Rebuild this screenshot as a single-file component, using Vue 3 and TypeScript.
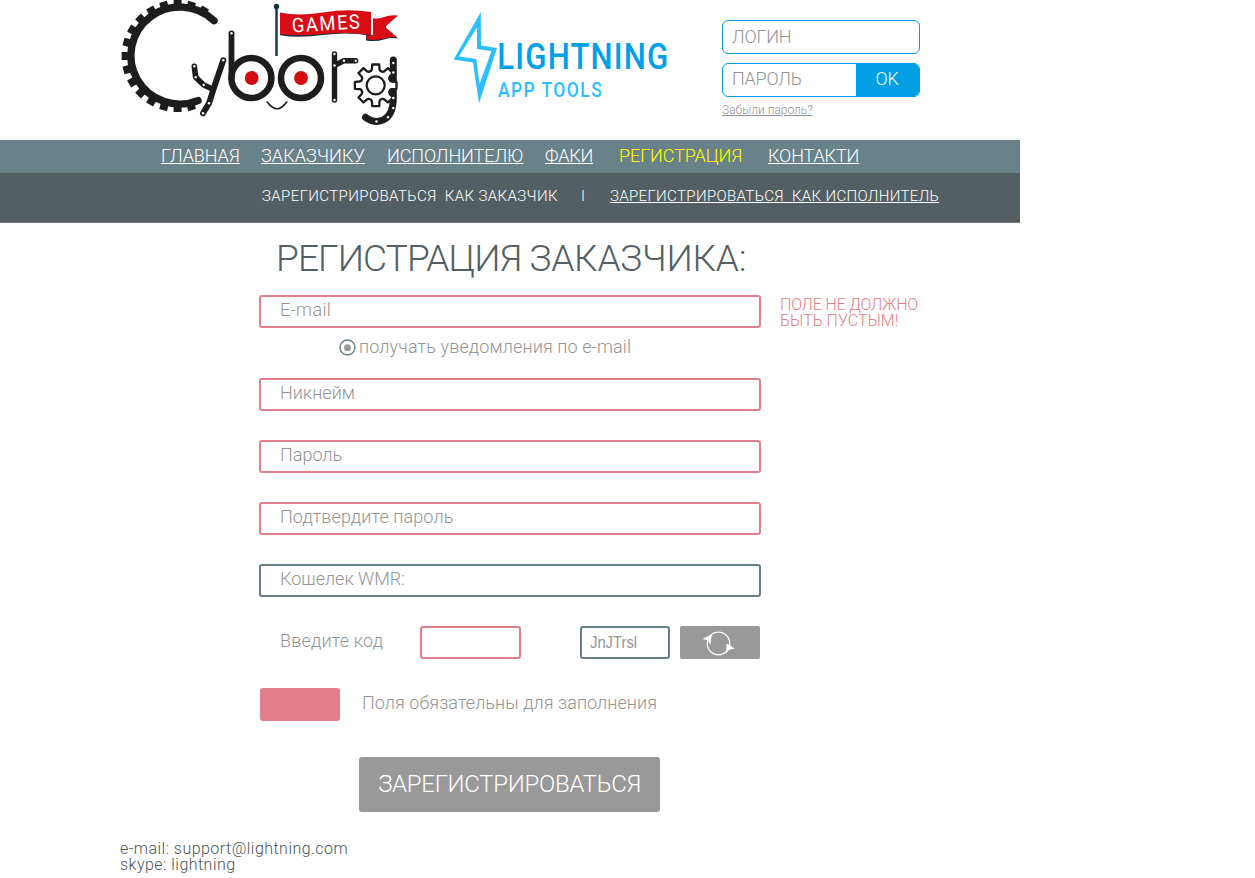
<script setup lang="ts">
const teeth: number[] = Array.from({ length: 16 }, (_, i) => 30 - i * 15)

const gearPath: string = (() => {
  const points: string[] = []
  for (let i = 0; i < 8; i++) {
    const a = (i * Math.PI) / 4
    const corners: [number, number][] = [[14.4, -4.6], [16, -3.8], [20.8, -3.5], [20.8, 3.5], [16, 3.8], [14.4, 4.6]]
    for (const [x, y] of corners) {
      points.push(`${(375.7 + x * Math.cos(a) - y * Math.sin(a)).toFixed(2)} ${(85.3 + x * Math.sin(a) + y * Math.cos(a)).toFixed(2)}`)
    }
  }
  return `M${points.join('L')}Z`
})()

interface NavItem { label: string; cls: string }
const nav: NavItem[] = [
  { label: 'ГЛАВНАЯ', cls: 'n1' },
  { label: 'ЗАКАЗЧИКУ', cls: 'n2' },
  { label: 'ИСПОЛНИТЕЛЮ', cls: 'n3' },
  { label: 'ФАКИ', cls: 'n4' },
  { label: 'РЕГИСТРАЦИЯ', cls: 'n5 active' },
  { label: 'КОНТАКТИ', cls: 'n6' },
]

const rivets: [number, number][] = [
  [194.3, 66.3], [195.7, 77.3], [203.7, 85], [223.3, 60.3], [209, 103.3], [203, 113.3], [231.5, 33.3],
  [334.5, 54], [334.5, 65.5], [344, 60.7], [355.7, 60.7], [334.5, 100],
  [393.3, 63], [393.3, 72.5], [393.3, 98], [393.3, 108], [388, 117.3], [376.5, 121.5],
]
</script>

<template>
  <div class="page">
    <header class="header">
      <svg class="cyborg" viewBox="115 0 290 130" width="290" height="130">
        <g fill="none" stroke="#1d1d1b" stroke-linecap="round" stroke-linejoin="round">
          <path d="M214 20.7A49 48.5 0 1 0 198 100.6" stroke-width="7.4" />
          <path d="M194.3 66.3L195.7 77.3L203.7 85L212.3 89" stroke-width="5.6" />
          <path d="M223.3 60.3L213.7 88.5L209 103.3L203 113.3" stroke-width="6" />
          <path d="M231.5 33.3V78" stroke-width="5.8" />
          <circle cx="251.4" cy="78" r="20" stroke-width="6.5" />
          <circle cx="301" cy="78" r="20" stroke-width="6.5" />
          <path d="M267.3 102Q277 115.5 286.7 102" stroke-width="1.6" />
          <path d="M334.5 54V100M334.5 65.5L344 60.7H355.7" stroke-width="5.4" />
          <path d="M393.3 60V98C393.3 121 378 126 365.5 117.3" stroke-width="7" />
          <path :d="gearPath" fill="#fff" stroke-width="2.3" />
          <circle cx="375.7" cy="85.3" r="9" stroke-width="2.2" />
        </g>
        <g fill="#1d1d1b">
          <rect v-for="a in teeth" :key="a" x="173.6" y="0" width="8" height="7" :transform="`rotate(${a} 177.6 56)`" />
        </g>
        <circle cx="251.7" cy="78" r="6.9" fill="#d20a11" />
        <circle cx="301" cy="78" r="6.9" fill="#d20a11" />
        <circle v-for="(r, i) in rivets" :key="i" :cx="r[0]" :cy="r[1]" r="1.2" fill="#fff" />
        <path d="M276.5 6V56" stroke="#0b3540" stroke-width="2.4" />
        <circle cx="276.5" cy="6.5" r="2.7" fill="#0b3540" />
        <path d="M366 35V40.5Q376 42 384 39.5T398 38.8L386 28V20L373 19V35Z" fill="#0b3540" />
        <path d="M366.5 34V39.3Q376 41 384 38.5T397.5 37.6L385 27L398 15.6Q391 14.5 384 17T373 18V35Z" fill="#d90b14" />
        <path d="M280 35.2Q298 38.5 323 35T371 35.8V33H280Z" fill="#0b3540" />
        <path d="M280 12.5Q298 16.5 323 12.5T371 12V35Q347 31.5 323 34T280 34.2Z" fill="#d90b14" />
        <path d="M372.2 18V35" stroke="#fff" stroke-width="1.3" />
        <text class="games" transform="translate(292.3 32.5) rotate(-3.5) scale(.92 1)" textLength="74">GAMES</text>
      </svg>
      <svg class="lightning" viewBox="445 5 235 105" width="235" height="105">
        <path fill="#2cbfff" fill-rule="evenodd" d="M480.8 12L481 45.5L497 48L479 103.5L473 62.5L453.7 59.5ZM477 27.5L458.8 56.5L476.3 59L479.5 84L491.5 51L477 49Z" />
        <text class="lt" transform="translate(497.3 69) scale(.83 1)" textLength="206">LIGHTNING</text>
        <text class="at" transform="translate(498 97) scale(.85 1)" textLength="122">APP TOOLS</text>
      </svg>
      <form class="login">
        <div class="box">ЛОГИН</div>
        <div class="box second"><span class="pw">ПАРОЛЬ</span><span class="ok">OK</span></div>
        <a class="forgot">Забыли пароль?</a>
      </form>
    </header>
    <nav class="nav"><a v-for="n in nav" :key="n.label" :class="n.cls"><span>{{ n.label }}</span></a></nav>
    <div class="subnav">
      <span class="s1">ЗАРЕГИСТРИРОВАТЬСЯ&nbsp; КАК ЗАКАЗЧИК</span>
      <span class="sep">I</span>
      <a class="s2">ЗАРЕГИСТРИРОВАТЬСЯ&nbsp; КАК ИСПОЛНИТЕЛЬ</a>
    </div>
    <main class="main">
      <h1>РЕГИСТРАЦИЯ <span>ЗАКАЗЧИКА:</span></h1>
      <div class="row"><div class="field f1">E-mail</div><p class="error"><span class="e1">ПОЛЕ НЕ ДОЛЖНО</span><span>БЫТЬ ПУСТЫМ!</span></p></div>
      <div class="notify">
        <svg width="17" height="17" viewBox="0 0 17 17"><circle cx="8.5" cy="8.5" r="7.5" fill="none" stroke="#678087" stroke-width="1.4" /><circle cx="8.5" cy="8.7" r="3.5" fill="#999" /></svg>
        <span>получать уведомления по e-mail</span>
      </div>
      <div class="field f2">Никнейм</div>
      <div class="field f3">Пароль</div>
      <div class="field f4">Подтвердите пароль</div>
      <div class="field f5 dark">Кошелек WMR:</div>
      <div class="code">
        <span class="label">Введите код</span>
        <div class="field input"></div>
        <div class="field dark captcha"><span>JnJTrsl</span></div>
        <button class="refresh" type="button">
          <svg width="36" height="28" viewBox="701 629 36 28">
            <circle cx="718.5" cy="642.5" r="11.3" fill="none" stroke="#fff" stroke-width="1.2" />
            <path d="M702.5 638L712 633L710.3 644L707.8 639.3ZM735 647.5L726.5 642.5L726 652L729 648.8Z" fill="#fff" />
          </svg>
        </button>
      </div>
      <div class="legend"><i></i><span>Поля обязательны для заполнения</span></div>
      <button class="submit" type="button">ЗАРЕГИСТРИРОВАТЬСЯ</button>
    </main>
    <footer class="footer"><span>e-mail: support@lightning.com</span><span>skype: lightning</span></footer>
  </div>
</template>

<style>
body { background: #fff; overflow: hidden; }
</style>

<style scoped>
.page { width: 1255px; height: 878px; font-family: Roboto, sans-serif; font-weight: 300; color: #949494; font-size: 18px; line-height: 20px; white-space: nowrap; }
.page * { box-sizing: border-box; }
.header { display: flex; height: 140px; padding-left: 115px; }
.cyborg { flex: none; }
.lightning { flex: none; margin: 5px 41.5px 0 40px; }
.games { font: 400 20px Roboto, sans-serif; fill: #fff; }
.lt { font: 500 37.5px Roboto, sans-serif; fill: #009fe8; }
.at { font: 500 20.5px Roboto, sans-serif; fill: #2cbfff; }
.login { width: 198px; padding-top: 20px; }
.box { display: flex; height: 34px; border: 1px solid #009fe3; border-radius: 6px; padding-left: 9.5px; line-height: 31px; overflow: hidden; letter-spacing: -.2px; }
.second { margin-top: 9px; line-height: 29px; }
.pw { flex: 1; }
.ok { width: 63px; background: #009fe3; color: #fff; text-align: center; }
.forgot { display: block; font-size: 12px; line-height: 14px; margin: 6px 0 0 .5px; text-decoration: underline; }
.nav { width: 1020px; height: 33px; background: #698188; color: #fff; display: flex; padding-left: 161px; line-height: 32px; letter-spacing: -.07px; }
.nav a { text-decoration: underline; flex: none; }
.nav .n1 { width: 100px; }
.nav .n2 { width: 126px; letter-spacing: .1px; }
.nav .n3 { width: 158px; }
.nav .n4 { width: 74px; letter-spacing: -.2px; }
.nav .n5 { width: 149px; }
.nav .n6 { letter-spacing: -.13px; }
.nav .active { color: #ff0; text-decoration: none; }
.subnav { width: 1020px; height: 50px; background: #545f63; border-bottom: 1px solid #758085; color: #fff; display: flex; padding-left: 262px; font-size: 15px; line-height: 46px; letter-spacing: .35px; }
.s1 { width: 319px; letter-spacing: .39px; }
.sep { width: 29px; }
.s2 { text-decoration: underline; }
.main { padding-left: 259px; height: 615px; padding-top: 12px; }
h1 { margin: 0 0 12px; padding-left: 17px; font-weight: 300; font-size: 37px; line-height: 48px; letter-spacing: -.87px; color: #545f63; }
h1 span { letter-spacing: -.27px; }
.field { width: 502px; height: 33px; border: 2px solid #e07e89; border-radius: 3px; padding-left: 19px; line-height: 25px; flex: none; }
.dark { border-color: #678087; }
.row { display: flex; }
.f1 { letter-spacing: .35px; }
.error { margin: 2px 0 0 19px; color: #e07e89; font-size: 16px; line-height: 16px; }
.error span { display: block; }
.e1 { letter-spacing: -.15px; }
.notify { display: flex; align-items: center; height: 37px; padding-left: 80px; gap: 3px; margin-bottom: 12px; letter-spacing: .12px; }
.notify span { padding-bottom: 1px; }
.f2, .f3, .f4 { margin-bottom: 29px; }
.f4 { letter-spacing: .1px; }
.code { display: flex; height: 33px; margin-top: 29px; padding-left: 21px; }
.label { width: 140px; line-height: 30px; letter-spacing: .17px; }
.input { width: 101px; margin-right: 59px; }
.captcha { width: 90px; padding-left: 8px; font: 400 17px/29px "Liberation Sans", sans-serif; }
.captcha span { display: inline-block; transform: scaleX(.87); transform-origin: left; }
.refresh { width: 80px; height: 33px; margin-left: 10px; border: 0; border-radius: 2px; background: #999; padding: 2px 0 0; }
.refresh svg { display: block; margin-left: 21px; }
.legend { display: flex; height: 33px; margin-top: 29px; padding-left: 1px; line-height: 30px; letter-spacing: .05px; }
.legend i { width: 80px; border-radius: 3px; background: #e07e89; margin-right: 22px; }
.submit { display: block; width: 301px; height: 55px; margin: 36px 0 0 100px; border: 0; border-radius: 3px; background: #999; color: #fff; font: 300 24px/53px Roboto, sans-serif; letter-spacing: -.3px; padding: 0; }
.footer { padding: 3px 0 0 120px; color: #4a5558; font-size: 16px; line-height: 16px; letter-spacing: .47px; }
.footer span { display: block; }
</style>
